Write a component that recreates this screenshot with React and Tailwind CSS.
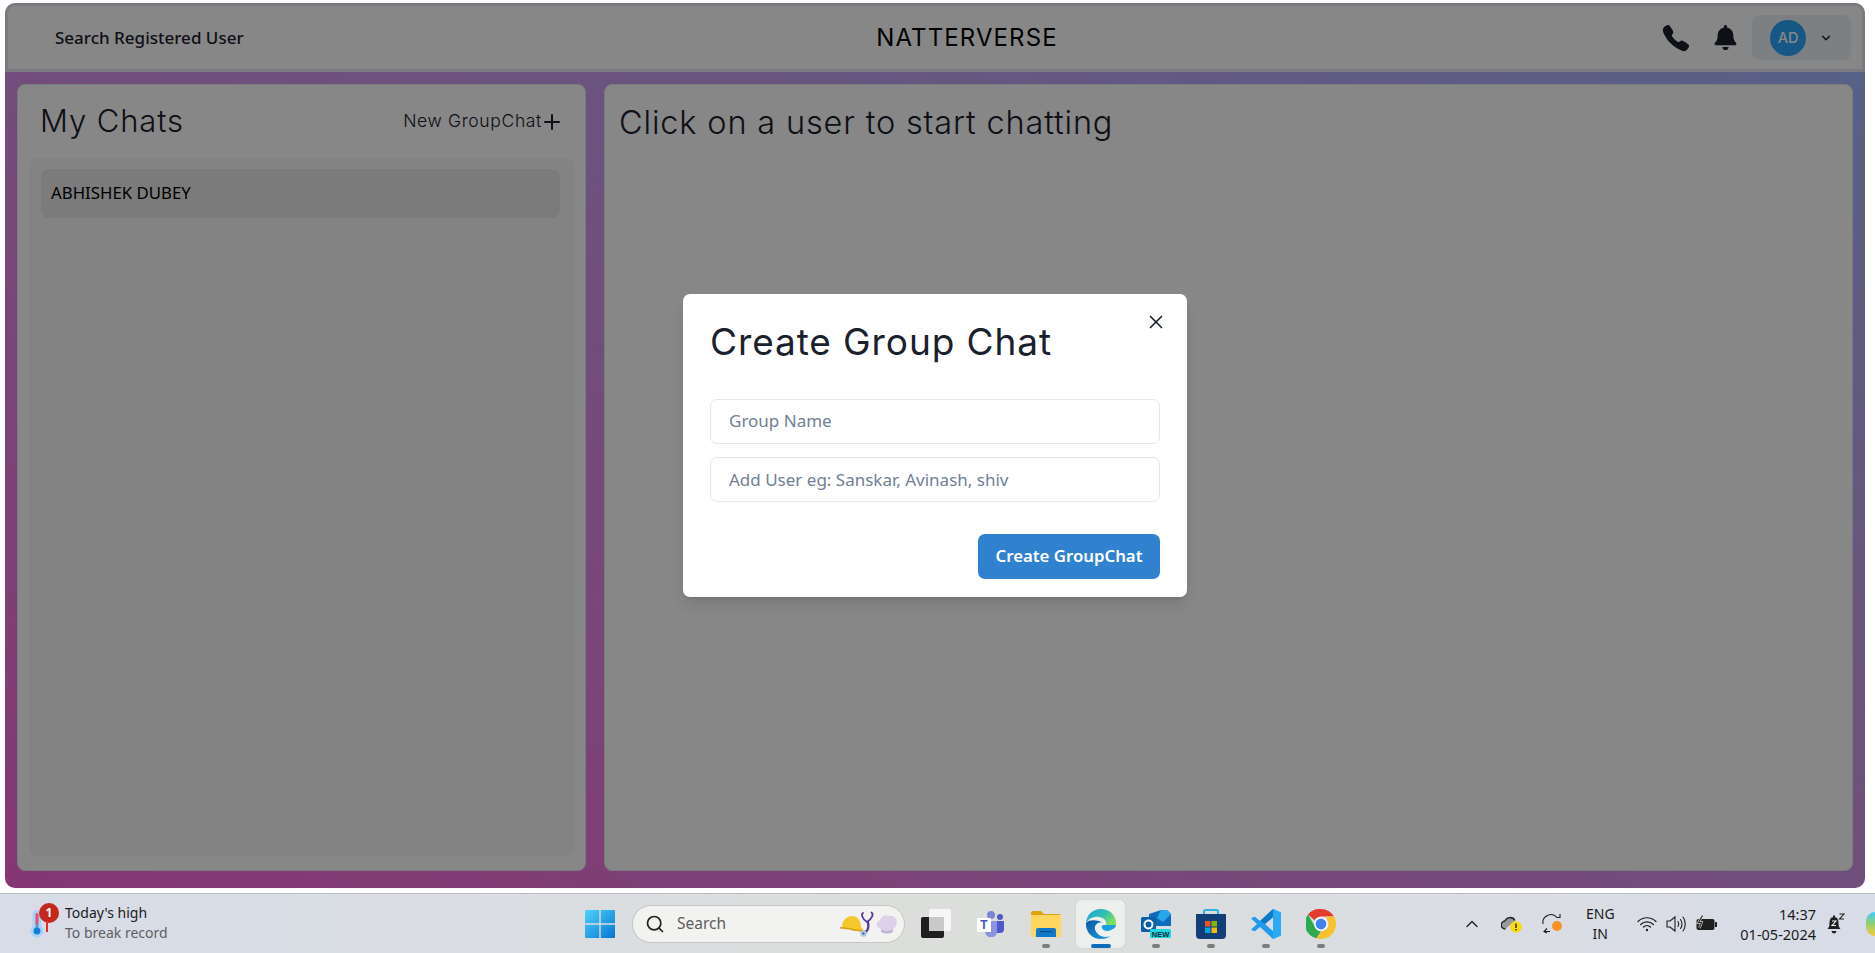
import React from 'react';
import { ChevronDown, ChevronUp, Plus, Search, X } from 'lucide-react';
import { FaBell } from 'react-icons/fa';
import { IoCall } from 'react-icons/io5';

const body = 'font-["Noto_Sans","Open_Sans",sans-serif]';
const heading = 'font-["Inter",sans-serif]';

const WindowsIcon = () => (
  <svg width="30" height="30" viewBox="0 0 30 30">
    <defs>
      <linearGradient id="win" x1="0" y1="0" x2="1" y2="1">
        <stop offset="0" stopColor="#4fd3fb" />
        <stop offset="1" stopColor="#0674d0" />
      </linearGradient>
    </defs>
    <path d="M1 1h13.3v13.3H0V2a1 1 0 0 1 1-1zM15.7 1H29a1 1 0 0 1 1 1v12.3H15.7zM0 15.7h14.3V29H1a1 1 0 0 1-1-1zM15.7 15.7H30V28a1 1 0 0 1-1 1H15.7z" fill="url(#win)" />
  </svg>
);

const HardHat = () => (
  <svg width="24" height="20" viewBox="0 0 24 20">
    <path d="M3 13C3 6 8 2 13 2c5 0 9 4 9 11l2 2v2c-6 0-10-1-13-2l-10-1z" fill="#f5c82e" />
    <path d="M1 13l10 1c3 1 7 2 13 2v1.500c-7 0-11-1-14-2L1 14.500z" fill="#d99f16" />
  </svg>
);

const Stethoscope = () => (
  <svg width="18" height="28" viewBox="0 0 18 28" fill="none">
    <path d="M3 3C1 4 2 9 7 12c5-3 7-8 4.500-9.500" stroke="#5b3aa0" strokeWidth="1.800" strokeLinecap="round" />
    <path d="M8 12c1 6 0 9-3 10" stroke="#5b3aa0" strokeWidth="2.400" strokeLinecap="round" />
    <circle cx="3.500" cy="23.500" r="3.200" fill="#a9c3e4" />
    <circle cx="3.500" cy="23.500" r="1" fill="#33507a" />
  </svg>
);

const ChefHat = () => (
  <svg width="24" height="22" viewBox="0 0 24 22">
    <path d="M6 16C1 15 0 9 5 7.500 6 3 11 1 14 3c4-1 9 2 7.500 7.500 0 3-2 4.500-3.500 5.500-3 2-9 2-12 0z" fill="#ddd1ea" />
    <path d="M6 16.500c4 1.500 8 1.500 12 0v2.500c-4 2-8 2-12 0z" fill="#c3b3d8" />
  </svg>
);

const TaskView = () => (
  <svg width="30" height="30" viewBox="0 0 30 30">
    <rect x="8" y="0" width="22" height="22" rx="2" fill="#f6f6f6" />
    <rect x="0" y="8" width="23" height="21" rx="2" fill="#1f1f1f" />
    <rect x="8" y="8" width="15" height="14" fill="#c9c9c9" />
  </svg>
);

const TeamsIcon = () => (
  <svg width="27" height="26" viewBox="0 0 27 26">
    <circle cx="14" cy="4" r="4" fill="#7b83d6" />
    <circle cx="23" cy="6" r="3" fill="#5059c9" />
    <path d="M18 10h9v8a4 4 0 0 1-4 4h-5z" fill="#5059c9" />
    <path d="M7 10h13v10a6 6 0 0 1-12 1z" fill="#8b92e0" />
    <rect x="0" y="7" width="14" height="14" fill="#fff" />
    <text x="7" y="18" fontSize="12" fontWeight="700" fill="#4b53bc" textAnchor="middle" fontFamily="Liberation Sans">T</text>
  </svg>
);

const FolderIcon = () => (
  <svg width="30" height="26" viewBox="0 0 30 26">
    <path d="M0 2a2 2 0 0 1 2-2h8l3 3h15a2 2 0 0 1 2 2v4H0z" fill="#dfa40d" />
    <path d="M0 4h30v20a2 2 0 0 1-2 2H2a2 2 0 0 1-2-2z" fill="#fdd65e" />
    <path d="M5 26v-7a2 2 0 0 1 2-2h16a2 2 0 0 1 2 2v7z" fill="#0f78c8" />
    <rect x="9" y="20" width="12" height="1.200" fill="#0b4f8a" />
  </svg>
);

const EdgeIcon = () => (
  <svg width="30" height="30" viewBox="0 0 30 30">
    <defs>
      <linearGradient id="edgeTop" x1="0" y1="0" x2="1" y2="0.6">
        <stop offset="0" stopColor="#1b9de2" />
        <stop offset="0.6" stopColor="#35c1b1" />
        <stop offset="1" stopColor="#7fe05c" />
      </linearGradient>
      <linearGradient id="edgeBottom" x1="0" y1="0" x2="1" y2="1">
        <stop offset="0" stopColor="#0c59a4" />
        <stop offset="1" stopColor="#1b9de2" />
      </linearGradient>
    </defs>
    <path d="M15 0C7 0 .5 5.500 0 14c3-5 8-7 13-6 6 1 8 5 7 8h10c1-9-6-16-15-16z" fill="url(#edgeTop)" />
    <path d="M0 14c-.500 9 6 16 15 16 4 0 7-1 10-3-5 2-11 1-14-3-3-3-3-8 1-10 2-1 4-1 5 0-4-3-14-4-17 0z" fill="url(#edgeBottom)" />
    <path d="M30 16H18c-2 0-3 1-2 3 1 3 6 4 9 2 3-1 5-3 5-5z" fill="#1b9de2" />
  </svg>
);

const OutlookIcon = () => (
  <svg width="30" height="28" viewBox="0 0 30 28">
    <path d="M8 4l12-4h6l4 4v12H8z" fill="#0f6cbd" />
    <path d="M20 0h6l4 4-8 8-6-4z" fill="#28a8ea" />
    <rect x="0" y="7" width="15" height="15" rx="1.500" fill="#0c5ea8" />
    <circle cx="7.500" cy="14.500" r="4" fill="none" stroke="#fff" strokeWidth="2" />
    <rect x="9" y="19" width="21" height="9" rx="1.500" fill="#24d6dc" />
    <text x="19.500" y="26.500" fontSize="7.500" fontWeight="700" fill="#062a3c" textAnchor="middle" fontFamily="Liberation Sans">NEW</text>
  </svg>
);

const StoreIcon = () => (
  <svg width="30" height="30" viewBox="0 0 30 30">
    <path d="M8 5V2.500A1.500 1.500 0 0 1 9.500 1h11A1.500 1.500 0 0 1 22 2.500V5" fill="none" stroke="#2bb3e8" strokeWidth="2" />
    <path d="M0 5h30v21a4 4 0 0 1-4 4H4a4 4 0 0 1-4-4z" fill="#123f78" />
    <rect x="9" y="12" width="5.500" height="5.500" fill="#f25022" />
    <rect x="15.500" y="12" width="5.500" height="5.500" fill="#7fba00" />
    <rect x="9" y="18.500" width="5.500" height="5.500" fill="#00a4ef" />
    <rect x="15.500" y="18.500" width="5.500" height="5.500" fill="#ffb900" />
  </svg>
);

const VsCodeIcon = () => (
  <svg width="30" height="30" viewBox="0 0 30 30">
    <path d="M22 0l8 3.500v23L22 30 9 18l-5.500 4.500L0 20.500 6 15 0 9.500l3.500-2L9 12zM22 8l-8 7 8 7z" fill="#1f9cf0" />
    <path d="M22 0l8 3.500v23L22 30z" fill="#29aaf5" />
    <path d="M22 0v8l-8 7-5-3z" fill="#0a7cc9" />
  </svg>
);

const ChromeIcon = () => (
  <svg width="30" height="30" viewBox="0 0 30 30">
    <path d="M15 0a15 15 0 0 1 13 7.500H15a7.500 7.500 0 0 0-6.500 3.750L2 5.500A15 15 0 0 1 15 0z" fill="#e33b2e" />
    <path d="M2 5.500l6.500 11.250A7.500 7.500 0 0 0 15 22.500L10.500 29.300A15 15 0 0 1 2 5.500z" fill="#2da94f" />
    <path d="M28 7.500a15 15 0 0 1-17.500 21.800L15 22.500a7.500 7.500 0 0 0 6.500-11.250L20 7.500z" fill="#fbc02d" />
    <circle cx="15" cy="15" r="6.800" fill="#fff" />
    <circle cx="15" cy="15" r="5.400" fill="#3f82f1" />
  </svg>
);

const Thermometer = () => (
  <svg width="14" height="28" viewBox="0 0 14 28">
    <rect x="2.500" y="0" width="9" height="24" rx="4.500" fill="#a6d4fb" />
    <circle cx="7" cy="21" r="6.500" fill="#a6d4fb" />
    <rect x="5.500" y="3" width="3" height="12" rx="1.500" fill="#e0506a" />
    <rect x="5.500" y="14" width="3" height="6" fill="#6f8fc8" />
    <circle cx="7" cy="21" r="3.500" fill="#0f7fd8" />
  </svg>
);

const CloudWarn = () => (
  <svg width="21" height="20" viewBox="0 0 21 20">
    <path d="M4.500 15a4 4 0 0 1-.5-8A5.500 5.500 0 0 1 14 6.500" fill="#9a9a9a" stroke="#1f1f1f" strokeWidth="1.300" />
    <circle cx="15" cy="13" r="5.800" fill="#fbdc00" />
    <rect x="14.300" y="9.500" width="1.400" height="4.500" fill="#1f1f1f" />
    <rect x="14.300" y="15" width="1.400" height="1.400" fill="#1f1f1f" />
  </svg>
);

const SyncIcon = () => (
  <svg width="21" height="21" viewBox="0 0 21 21" fill="none" stroke="#1f1f1f" strokeWidth="1.100">
    <path d="M1 11A8 8 0 0 1 15 4.500M18 1v3.500h-3.500" />
    <path d="M8 18.500H2.500M5 15.500l-3 3 3 1.500" />
    <circle cx="15" cy="13" r="5" fill="#f7931e" stroke="none" />
  </svg>
);

const WifiIcon = () => (
  <svg width="20" height="16" viewBox="0 0 20 16" fill="none" stroke="#1f1f1f" strokeWidth="1.200" strokeLinecap="round">
    <path d="M1 5.500c5-5 13-5 18 0" />
    <path d="M3.700 8.500c3.500-3.500 9.100-3.500 12.600 0" />
    <path d="M6.500 11c2-2 5-2 7 0" />
    <circle cx="10" cy="14" r="1.200" fill="#1f1f1f" stroke="none" />
  </svg>
);

const SpeakerIcon = () => (
  <svg width="20" height="18" viewBox="0 0 20 18" fill="none" stroke="#1f1f1f" strokeWidth="1.100" strokeLinecap="round">
    <path d="M1 6h3l5-4v14l-5-4H1z" />
    <path d="M12 6.500c1 1.500 1 3.500 0 5" />
    <path d="M14.500 4.500c2 2.500 2 6.500 0 9" />
    <path d="M17 2c3 4 3 10 0 14" />
  </svg>
);

const BatteryIcon = () => (
  <svg width="21" height="17" viewBox="0 0 21 17">
    <rect x="0.500" y="4" width="18" height="11" rx="2" fill="#1f1f1f" />
    <rect x="19" y="7" width="2" height="5" rx="0.500" fill="#1f1f1f" />
    <path d="M6.500 0.500L2.500 7.500h3L3.500 13" fill="none" stroke="#dcdedd" strokeWidth="2.400" />
    <path d="M6.500 0.500L2.500 7.500h3L3.500 13" fill="none" stroke="#1f1f1f" strokeWidth="1.100" />
  </svg>
);

const SnoozeBell = () => (
  <svg width="18" height="22" viewBox="0 0 18 22">
    <path d="M7 4C3.500 4 2.500 7 2.500 10S2 14.500 0.500 16h13c-1.500-1.500-2-3-2-6S10.500 4 7 4z" fill="#1f1f1f" />
    <rect x="6" y="2.500" width="2" height="2" fill="#1f1f1f" />
    <path d="M4.500 18h5a2.500 2.500 0 0 1-5 0z" fill="#1f1f1f" />
    <path d="M5 8h4l-4 4.500h4" fill="none" stroke="#f2f2f2" strokeWidth="1.100" />
    <path d="M12.500 1h4.500l-4.500 5h4.500" fill="none" stroke="#1f1f1f" strokeWidth="1.100" />
  </svg>
);

const apps = [
  { icon: <TaskView /> },
  { icon: <TeamsIcon /> },
  { icon: <FolderIcon />, dot: true },
  { icon: <EdgeIcon />, active: true },
  { icon: <OutlookIcon />, dot: true },
  { icon: <StoreIcon />, dot: true },
  { icon: <VsCodeIcon />, dot: true },
  { icon: <ChromeIcon />, dot: true },
];

const Taskbar = () => (
  <div className={`flex h-[60px] items-center border-t border-[#b9bcc2] bg-linear-to-r from-[#d7dce8] via-[#dcdedb] to-[#d8dce8] ${body}`}>
    <div className="flex w-[570px] items-center pl-[30px]">
      <div className="relative h-[28px] w-[35px]">
        <Thermometer />
        <span className="absolute left-[9px] top-[-7px] flex h-[20px] w-[20px] items-center justify-center rounded-full bg-[#c4281c] text-xs font-bold text-white">1</span>
        <span className="absolute left-[16px] top-[11px] h-[11px] w-[2px] bg-[#ee2a24]" />
      </div>
      <div className="pb-[2px] text-[14px] leading-[20px]">
        <div className="text-[#1b1b1b]">Today's high</div>
        <div className="text-[#5e5f63]">To break record</div>
      </div>
    </div>
    <div className="flex w-[60px] justify-center">
      <WindowsIcon />
    </div>
    <div className="mx-[2px] flex h-[38px] w-[273px] items-center rounded-full border border-[#c5c7c6] bg-[#f2f3f1] pl-[12px] pr-[5px]">
      <Search size={20} strokeWidth={2} className="text-[#1f1f1f]" />
      <span className="ml-[12px] flex-1 text-[15.500px] text-[#5d5d5d]">Search</span>
      <div className="flex items-center">
        <HardHat />
        <div className="-mx-[3px]">
          <Stethoscope />
        </div>
        <ChefHat />
      </div>
    </div>
    <div className="ml-[1px] flex">
      {apps.map((app, i) => (
        <div key={i} className={`relative flex h-[48px] items-center justify-center rounded-[5px] ${app.active ? 'mx-[3px] w-[49px] bg-[#ecefec] shadow-[0_0_1px_rgba(0,0,0,0.25)]' : 'w-[55px]'}`}>
          {app.icon}
          {app.dot && <span className="absolute bottom-[0px] h-[4px] w-[8px] rounded-full bg-[#7c7e7e]" />}
          {app.active && <span className="absolute bottom-[0px] h-[4px] w-[20px] rounded-full bg-[#0f6cbd]" />}
        </div>
      ))}
    </div>
    <div className="ml-auto flex items-center text-[#1b1b1b]">
      <ChevronUp size={20} strokeWidth={1.500} className="mr-[19px]" />
      <CloudWarn />
      <div className="ml-[20px]">
        <SyncIcon />
      </div>
      <div className="ml-[17px] w-[40px] text-center text-[14px] leading-[20px]">
        <div>ENG</div>
        <div>IN</div>
      </div>
      <div className="ml-[17px]">
        <WifiIcon />
      </div>
      <div className="ml-[9px]">
        <SpeakerIcon />
      </div>
      <div className="ml-[10px]">
        <BatteryIcon />
      </div>
      <div className="ml-[23px] text-right text-[14.500px] leading-[20px]">
        <div>14:37</div>
        <div>01-05-2024</div>
      </div>
      <div className="ml-[11px]">
        <SnoozeBell />
      </div>
      <div className="ml-[21px] h-[24px] w-[9px] rounded-l-[9px] bg-linear-to-b from-[#38c6f4] via-[#8fd06a] to-[#f5c93a]" />
    </div>
  </div>
);

const Navbar = () => (
  <div className="flex h-[69px] shrink-0 items-center rounded-t-[10px] border-[3px] border-[#e2e8f0] bg-white pl-[47px] pr-[11px]">
    <div className={`w-[592px] text-[17px] font-medium text-[#1a202c] ${body}`}>Search Registered User</div>
    <div className={`w-[640px] text-center text-[24px] tracking-[1.100px] text-black ${heading}`}>NATTERVERSE</div>
    <div className="ml-auto flex items-center text-[#1a202c]">
      <IoCall size={30} />
      <FaBell size={25} className="ml-[22px]" />
      <div className="ml-[14px] flex h-[45px] w-[99px] items-center rounded-[7px] bg-[#edf2f7] pl-[18px]">
        <div className="flex h-[36px] w-[36px] items-center justify-center rounded-full bg-[#2aa5fb] font-['Inter',sans-serif] text-[14.500px] font-medium text-white">AD</div>
        <ChevronDown size={14} strokeWidth={2.500} className="ml-[13px]" />
      </div>
    </div>
  </div>
);

const MyChats = () => (
  <div className="flex w-[569px] flex-col rounded-[8px] border border-[#e2e8f0] bg-white px-[11px] pb-[14px]">
    <div className={`flex h-[73px] shrink-0 items-center justify-between pl-[11px] pr-[10px] text-[#1a202c] ${heading}`}>
      <span className="text-[31px] font-light tracking-[0.900px]">My Chats</span>
      <span className="flex items-center text-[17.500px] font-light tracking-[0.650px]">
        New GroupChat
        <Plus size={24} strokeWidth={2} className="-ml-[2px]" />
      </span>
    </div>
    <div className="flex-1 rounded-[8px] bg-[#f8f8f8] pl-[12px] pr-[14px] pt-[11px]">
      <div className={`flex h-[49px] items-center rounded-[8px] bg-[#e8e8e8] px-[10px] pb-[2px] text-[16.800px] text-black ${body}`}>ABHISHEK DUBEY</div>
    </div>
  </div>
);

const GroupModal = () => (
  <div className="absolute inset-0 flex items-center justify-center rounded-[10px] bg-black/47">
    <div className="relative h-[303px] w-[504px] rounded-[7px] bg-white px-[27px] shadow-lg">
      <h2 className={`pt-[25px] text-[37px] leading-[46px] tracking-[0.900px] text-[#1a202c] ${heading}`}>Create Group Chat</h2>
      <X size={22} strokeWidth={1.800} className="absolute right-[20px] top-[17px] text-[#1a202c]" />
      <div className={`mt-[34px] flex flex-col gap-[13px] ${body}`}>
        <input placeholder="Group Name" className="h-[45px] rounded-[7px] border border-[#e2e8f0] px-[18px] pb-[2px] text-[17px] outline-none placeholder:text-[#718096]" />
        <input placeholder="Add User eg: Sanskar, Avinash, shiv" className="h-[45px] rounded-[7px] border border-[#e2e8f0] px-[18px] text-[17px] outline-none placeholder:text-[#718096]" />
      </div>
      <div className="mt-[32px] flex justify-end">
        <button className={`h-[45px] w-[182px] rounded-[7px] bg-[#3182ce] pb-[2px] text-[16.800px] font-semibold text-white ${body}`}>Create GroupChat</button>
      </div>
    </div>
  </div>
);

export default function App() {
  return (
    <div className="flex h-screen flex-col overflow-hidden bg-white">
      <div className="pl-[5px] pr-[10px] pt-[3px]">
        <div className="relative flex h-[885px] flex-col rounded-[10px] bg-linear-to-tr from-[#fb66d8] to-[#9fb8ff]">
          <Navbar />
          <div className="flex flex-1 gap-[18px] px-[12px] pb-[17px] pt-[12px]">
            <MyChats />
            <div className="flex-1 rounded-[8px] border border-[#e2e8f0] bg-white px-[14px] pt-[15px]">
              <div className={`text-[32.500px] font-light leading-[46px] tracking-[0.830px] text-[#1a202c] ${heading}`}>Click on a user to start chatting</div>
            </div>
          </div>
          <GroupModal />
        </div>
      </div>
      <div className="mt-[5px]">
        <Taskbar />
      </div>
    </div>
  );
}
